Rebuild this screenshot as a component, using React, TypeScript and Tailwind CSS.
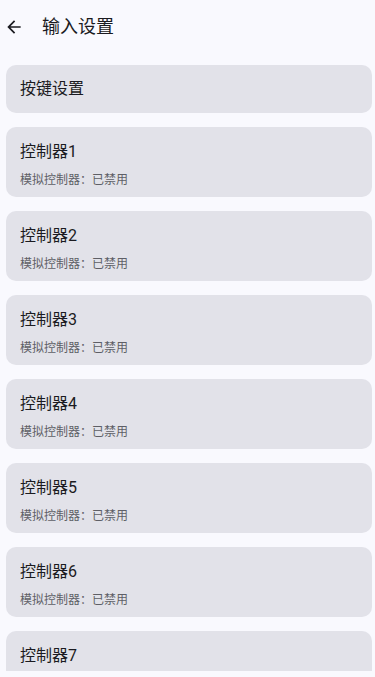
import React from "react";

const font = { fontFamily: "Roboto, 'Noto Sans CJK SC', sans-serif" };

export default function App() {
  const controllers = [1, 2, 3, 4, 5, 6, 7];
  return (
    <div
      className="w-[375px] h-[677px] overflow-hidden bg-[#f9f9fe] text-[#1b1b21]"
      style={font}
    >
      <div className="h-[54px] flex items-center">
        <div className="ml-[4px] w-5 h-5 flex items-center justify-center">
          <svg width="20" height="20" viewBox="0 0 24 24" fill="#1b1b21">
            <path d="M20 11H7.83l5.59-5.59L12 4l-8 8 8 8 1.41-1.41L7.83 13H20v-2z" />
          </svg>
        </div>
        <div className="ml-[18px] text-[18px] leading-6">输入设置</div>
      </div>
      <div className="h-[617px] overflow-hidden pt-[11px]">
        <div className="ml-[6px] mr-[3px] flex flex-col gap-[14px]">
          <div className="h-12 rounded-[10px] bg-[#e2e2e9] flex items-center px-[14px] text-[16px]">
            按键设置
          </div>
          {controllers.map((n) => (
            <div
              key={n}
              className="h-[70px] shrink-0 rounded-[10px] bg-[#e2e2e9] px-[14px] pt-[13px]"
            >
              <div className="text-[16px] leading-6">控制器{n}</div>
              <div className="mt-[8px] text-[12px] leading-4 text-[#5e5f66]">
                模拟控制器：已禁用
              </div>
            </div>
          ))}
        </div>
      </div>
    </div>
  );
}
